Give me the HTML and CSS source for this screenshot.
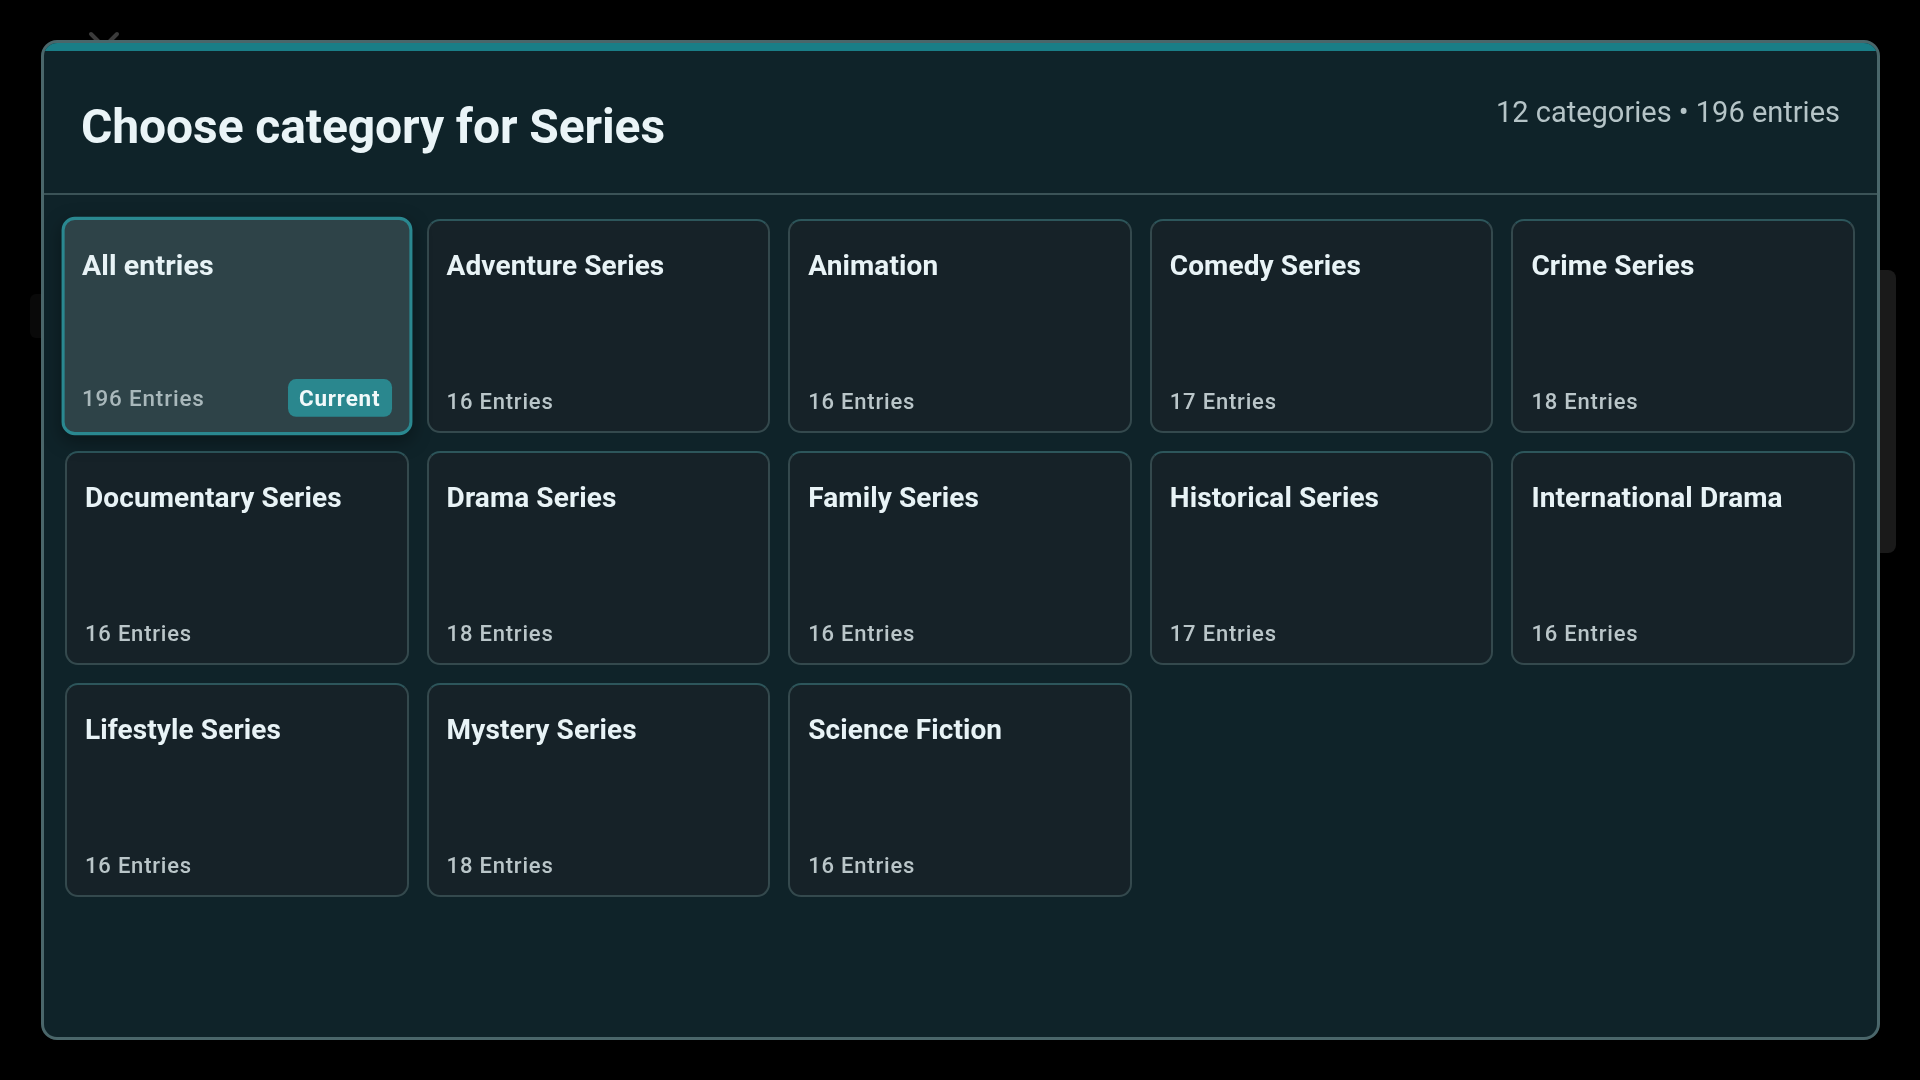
FILE: index.html
```html
<!DOCTYPE html>
<html lang="en">
<head>
<meta charset="utf-8">
<title>Choose category for Series</title>
<link rel="stylesheet" href="styles.css">
</head>
<body>
<div class="backdrop">
  <svg class="bg-close" viewBox="0 0 32 32" width="32" height="32" aria-hidden="true">
    <path d="M3 3 L29 29 M29 3 L3 29" stroke="#3b3b3b" stroke-width="4" stroke-linecap="round" fill="none"/>
  </svg>
  <div class="bg-panel"></div>
  <div class="bg-left"></div>
</div>

<div class="modal" role="dialog" aria-label="Choose category for Series">
  <div class="accent"></div>
  <header class="modal-head">
    <h1 class="modal-title">Choose category for Series</h1>
    <div class="modal-meta">12 categories • 196 entries</div>
  </header>
  <div class="grid">
    <div class="card current">
      <div class="card-title">All entries</div>
      <div class="card-foot"><span class="count">196 Entries</span><span class="badge">Current</span></div>
    </div>
    <div class="card">
      <div class="card-title">Adventure Series</div>
      <div class="card-foot"><span class="count">16 Entries</span></div>
    </div>
    <div class="card">
      <div class="card-title">Animation</div>
      <div class="card-foot"><span class="count">16 Entries</span></div>
    </div>
    <div class="card">
      <div class="card-title">Comedy Series</div>
      <div class="card-foot"><span class="count">17 Entries</span></div>
    </div>
    <div class="card">
      <div class="card-title">Crime Series</div>
      <div class="card-foot"><span class="count">18 Entries</span></div>
    </div>
    <div class="card">
      <div class="card-title">Documentary Series</div>
      <div class="card-foot"><span class="count">16 Entries</span></div>
    </div>
    <div class="card">
      <div class="card-title">Drama Series</div>
      <div class="card-foot"><span class="count">18 Entries</span></div>
    </div>
    <div class="card">
      <div class="card-title">Family Series</div>
      <div class="card-foot"><span class="count">16 Entries</span></div>
    </div>
    <div class="card">
      <div class="card-title">Historical Series</div>
      <div class="card-foot"><span class="count">17 Entries</span></div>
    </div>
    <div class="card">
      <div class="card-title">International Drama</div>
      <div class="card-foot"><span class="count">16 Entries</span></div>
    </div>
    <div class="card">
      <div class="card-title">Lifestyle Series</div>
      <div class="card-foot"><span class="count">16 Entries</span></div>
    </div>
    <div class="card">
      <div class="card-title">Mystery Series</div>
      <div class="card-foot"><span class="count">18 Entries</span></div>
    </div>
    <div class="card">
      <div class="card-title">Science Fiction</div>
      <div class="card-foot"><span class="count">16 Entries</span></div>
    </div>
  </div>
</div>
</body>
</html>
```

FILE: styles.css
```css
* { box-sizing: border-box; }

html, body {
  margin: 0;
  padding: 0;
  width: 1920px;
  height: 1080px;
  overflow: hidden;
  background: #000;
  font-family: Roboto, "Noto Sans", "Liberation Sans", sans-serif;
}

.backdrop {
  position: absolute;
  inset: 0;
}

.bg-close {
  position: absolute;
  left: 88px;
  top: 31px;
}

.bg-panel {
  position: absolute;
  left: 1700px;
  top: 270px;
  width: 196px;
  height: 283px;
  border-radius: 8px;
  background: #1a1a1a;
}

.bg-left {
  position: absolute;
  left: 30px;
  top: 294px;
  width: 36px;
  height: 44px;
  border-radius: 6px;
  background: #090909;
}

.modal {
  position: fixed;
  top: 40px;
  left: 41px;
  width: 1839px;
  height: 1000px;
  border: 3px solid #4a666a;
  border-radius: 16px;
  background: #0f2329;
  overflow: hidden;
  display: flex;
  flex-direction: column;
}

.accent {
  height: 8px;
  flex: none;
  background: #1a7e87;
}

.modal-head {
  flex: none;
  display: flex;
  justify-content: space-between;
  align-items: flex-start;
  padding: 44px 37px 38px 37px;
  border-bottom: 2px solid #3b5357;
}

.modal-title {
  margin: 4px 0 0;
  font-size: 48px;
  line-height: 56px;
  font-weight: 700;
  color: #eaf4f7;
  letter-spacing: -0.1px;
}

.modal-meta {
  font-size: 29px;
  line-height: 34px;
  font-weight: 400;
  color: #b5c4c7;
}

.grid {
  display: grid;
  grid-template-columns: repeat(5, 1fr);
  grid-auto-rows: 214px;
  gap: 18px;
  padding: 24px 22px 0 21px;
}

.card {
  display: flex;
  flex-direction: column;
  justify-content: space-between;
  padding: 28px 18px 17px;
  border: 2px solid #34494d;
  border-top-color: #2d565b;
  border-radius: 13px;
  background: #162228;
}

.card-title {
  font-size: 28px;
  line-height: 33px;
  font-weight: 700;
  letter-spacing: 0.1px;
  color: #e8f3f6;
  white-space: nowrap;
}

.card-foot {
  display: flex;
  justify-content: space-between;
  align-items: center;
}

.count {
  font-size: 22px;
  font-weight: 500;
  letter-spacing: 0.8px;
  color: #bac6c9;
}

.card.current {
  transform: scale(1.02);
  background: #2e4348;
  border: 3px solid #2a8890;
  padding: 28px 17px 15px;
  box-shadow: 0 6px 18px rgba(0, 0, 0, 0.35);
}

.card.current .count {
  color: #a9b8bb;
}

.badge {
  font-size: 22px;
  line-height: 27px;
  font-weight: 700;
  letter-spacing: 0.8px;
  color: #f1f9fa;
  background: #2a878e;
  border-radius: 8px;
  padding: 5px 11px;
}
```
